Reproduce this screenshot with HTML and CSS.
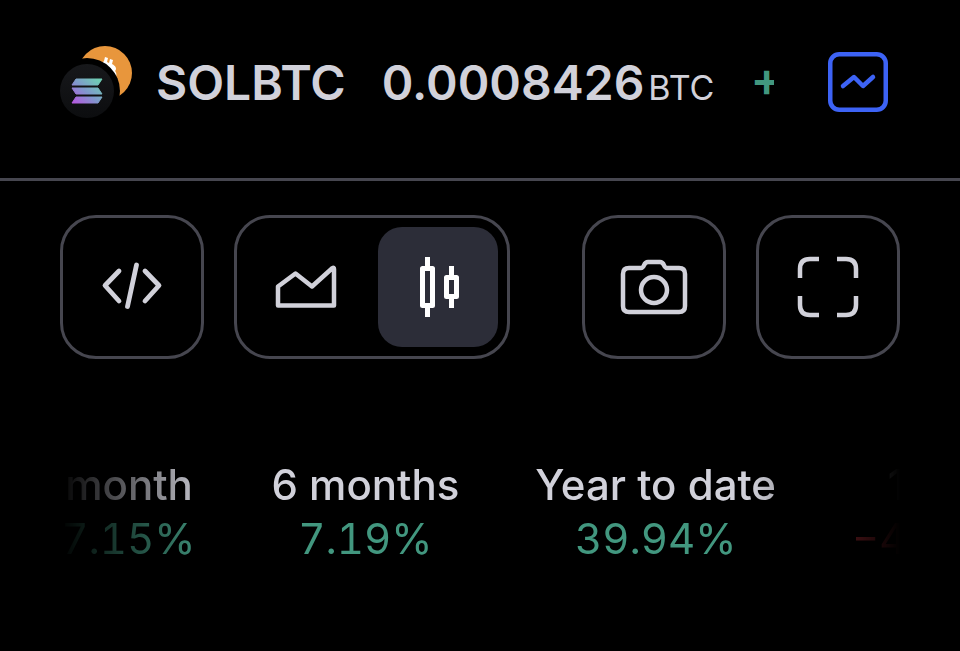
FILE: index.html
```
<!DOCTYPE html>
<html lang="en">
<head>
  <meta charset="UTF-8">
  <meta name="viewport" content="width=device-width, initial-scale=1.0">
  <title>SOLBTC</title>
  <link rel="stylesheet" href="styles.css">
</head>
<body>

<header class="header">
  <svg class="pair-logo" viewBox="0 0 72 72" aria-hidden="true">
    <defs>
      <linearGradient id="sol" gradientUnits="userSpaceOnUse" x1="14" y1="57" x2="36" y2="32">
        <stop offset="0" stop-color="#b45ae0"/>
        <stop offset="0.5" stop-color="#8098cc"/>
        <stop offset="1" stop-color="#6fcdb4"/>
      </linearGradient>
      <linearGradient id="disc" x1="0" y1="0" x2="0" y2="1">
        <stop offset="0" stop-color="#17181b"/>
        <stop offset="1" stop-color="#0c0d0f"/>
      </linearGradient>
    </defs>
    <circle cx="45" cy="27" r="27" fill="#e8963c"/>
    <path d="M45 11l3 1-1 4 2 1 1-4 3 1-1 4c4 2 5 5 3 7 2 2 2 6-1 8L42 17l2-2z" fill="#fff"/>
    <circle cx="27" cy="45" r="33" fill="#000"/>
    <circle cx="27" cy="45" r="27" fill="url(#disc)"/>
    <path d="M16 33h26l-4 6H12zM12 42h26l4 6H16zM16 51h26l-4 6H12z" fill="url(#sol)" stroke="url(#sol)" stroke-linejoin="round"/>
  </svg>
  <div class="quote">
    <h1 class="symbol">SOLBTC</h1>
    <div class="price">0.0008426<span class="currency">BTC</span></div>
    <div class="change">+0.52%</div>
  </div>
  <button class="chart-btn" type="button" aria-label="Chart">
    <svg width="60" height="60" viewBox="0 0 60 60" fill="none" stroke="#3d63f5" stroke-width="4.500">
      <rect x="2.250" y="2.250" width="55.500" height="55.500" rx="9"/>
      <path d="M15 34L26 25L35 34L45 25" stroke-linecap="round" stroke-linejoin="round"/>
    </svg>
  </button>
</header>

<main>
  <div class="toolbar">
    <button class="tool" type="button" aria-label="Embed">
      <svg width="84" height="84" viewBox="0 0 84 84" fill="none" stroke="currentColor" stroke-width="4.800" stroke-linecap="round" stroke-linejoin="round">
        <path d="M29 26L15 40.500L29 56M55 26L69 40.500L55 56M46.500 20L37.500 61.500"/>
      </svg>
    </button>
    <div class="switch">
      <button class="option" type="button" aria-label="Area chart">
        <svg width="84" height="84" viewBox="0 0 84 84" fill="none" stroke="currentColor" stroke-width="4.500" stroke-linejoin="round">
          <path d="M14 60.500V41.500L31.500 28.500L48 41.500L68.500 23Q70 22 70 24V60.500z"/>
        </svg>
      </button>
      <button class="option active" type="button" aria-label="Candles">
        <svg width="84" height="84" viewBox="0 0 84 84" fill="none" stroke="currentColor" stroke-width="5" stroke-linejoin="round">
          <path d="M26.500 23.500h10v37h-10zM50.500 32.500h10v19h-10zM31.500 12v9M31.500 63v9M55.500 21v9M55.500 54v9"/>
        </svg>
      </button>
    </div>
    <button class="tool push" type="button" aria-label="Snapshot">
      <svg width="84" height="84" viewBox="0 0 84 84" fill="none" stroke="currentColor" stroke-width="4.500">
        <path d="M17 23H29C33 23 31 17 36 17H48C53 17 51 23 55 23H67Q73 23 73 29V61Q73 67 67 67H17Q11 67 11 61V29Q11 23 17 23z"/>
        <circle cx="42" cy="45" r="13"/>
      </svg>
    </button>
    <button class="tool" type="button" aria-label="Fullscreen">
      <svg width="84" height="84" viewBox="0 0 84 84" fill="none" stroke="currentColor" stroke-width="4.500">
        <path d="M14 33V24Q14 14 24 14H33M51 14H60Q70 14 70 24V33M70 51V60Q70 70 60 70H51M33 70H24Q14 70 14 60V51"/>
      </svg>
    </button>
  </div>

  <div class="ranges">
    <ul class="range-list">
      <li class="range">1 month<span class="up">27.15%</span></li>
      <li class="range">6 months<span class="up">7.19%</span></li>
      <li class="range">Year to date<span class="up">39.94%</span></li>
      <li class="range">1 year<span class="down">−43.28%</span></li>
    </ul>
  </div>
</main>

</body>
</html>
```

FILE: styles.css
```
body {
  margin: 0;
  background: #000;
  color: #d1d1da;
  font-family: Inter, sans-serif;
  overflow-x: hidden;
}

button {
  margin: 0;
  padding: 0;
  background: none;
  border: none;
  color: inherit;
  cursor: pointer;
}

svg {
  display: block;
  flex: none;
}

.header {
  display: flex;
  align-items: center;
  height: 72px;
  padding: 46px 60px 60px;
  border-bottom: 3px solid #46464f;
}

.pair-logo {
  width: 72px;
  height: 72px;
}

.quote {
  flex: 1;
  min-width: 0;
  display: flex;
  align-items: baseline;
  gap: 36px;
  margin: 0 42px 0 24px;
  padding-top: 6px;
  overflow: hidden;
  white-space: nowrap;
  font-size: 48px;
  line-height: 72px;
  font-weight: 600;
}

.symbol {
  margin: 0;
  font-size: 48px;
  font-weight: 600;
}

.currency {
  margin-left: 4px;
  font-size: 34px;
  font-weight: 400;
}

.change {
  font-size: 48px;
  color: #42977f;
}

.chart-btn {
  padding: 12px;
}

.toolbar {
  display: flex;
  gap: 30px;
  padding: 34px 60px 0;
}

.tool,
.switch {
  display: flex;
  align-items: center;
  justify-content: center;
  box-sizing: border-box;
  height: 144px;
  border: 3px solid #46464f;
  border-radius: 36px;
}

.tool {
  width: 144px;
}

.push {
  margin-left: auto;
}

.switch {
  gap: 12px;
  padding: 9px;
}

.option {
  display: flex;
  align-items: center;
  justify-content: center;
  width: 120px;
  height: 120px;
  border-radius: 24px;
}

.option.active {
  background: #2c2d38;
  color: #fff;
}

.ranges {
  margin: 99px 60px 0;
  overflow: hidden;
  -webkit-mask-image: linear-gradient(to right, transparent, #000 150px, #000 calc(100% - 150px), transparent);
  mask-image: linear-gradient(to right, transparent, #000 150px, #000 calc(100% - 150px), transparent);
}

.range-list {
  display: flex;
  gap: 76px;
  margin: 0 0 0 -26px; /* scrolled a little to the right */
  padding: 0;
  list-style: none;
}

.range {
  flex: none;
  text-align: center;
  white-space: nowrap;
  font-size: 42px;
  line-height: 54px;
  font-weight: 500;
}

.range span {
  display: block;
  font-weight: 400;
  font-variant-numeric: tabular-nums;
}

.up {
  color: #42977f;
}

.down {
  color: #c7323c;
}
```
